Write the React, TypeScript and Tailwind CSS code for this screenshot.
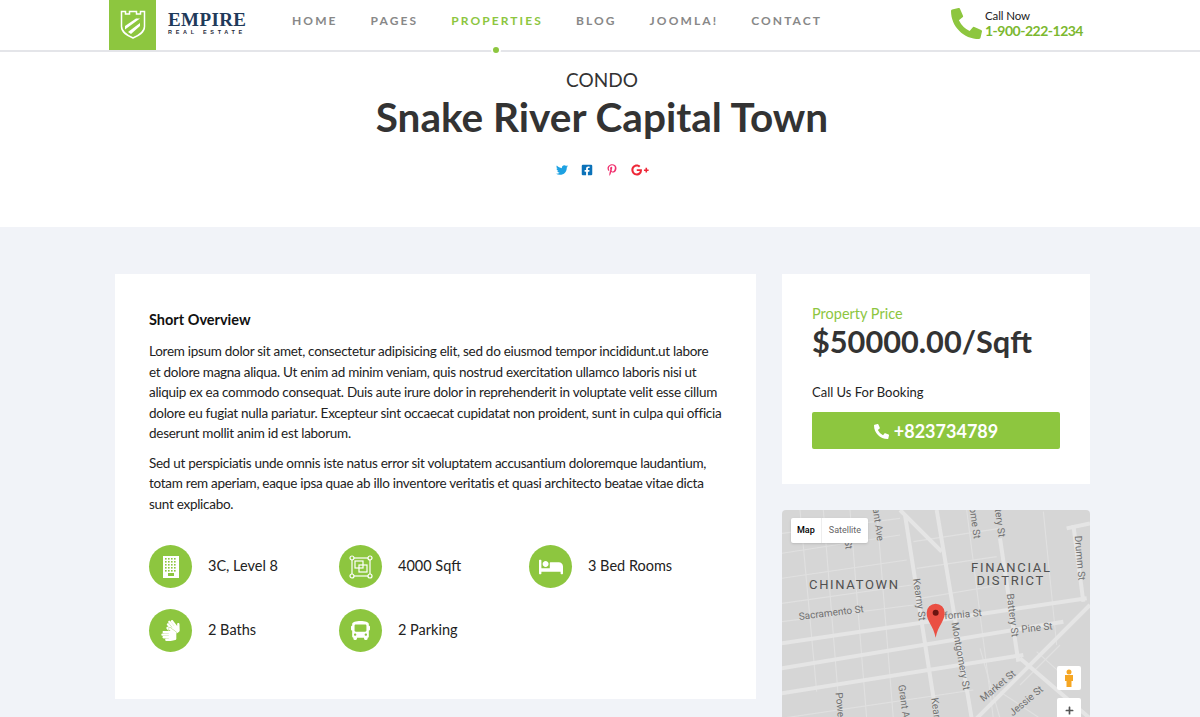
import {
  FaBed,
  FaBus,
  FaFacebookSquare,
  FaGooglePlusG,
  FaPhoneAlt,
  FaPinterestP,
  FaPlus,
  FaSignLanguage,
  FaTwitter,
} from "react-icons/fa";

const navLinks = ["HOME", "PAGES", "PROPERTIES", "BLOG", "JOOMLA!", "CONTACT"];

const ShieldLogo = () => (
  <svg width="26" height="30" viewBox="0 0 26 30" fill="none">
    <path d="M1.5 1.5h4v2.5h4V1.5h7v2.5h4V1.5h4v15c0 6-6 9-11.500 11.500C7.500 25.500 1.500 22.500 1.500 16.500z" stroke="white" strokeWidth="1.500" />
    <path d="M5 16l11-7.500 4 0-15 11z" fill="white" />
    <path d="M8 22l12-9v3l-9 8z" fill="white" />
  </svg>
);

const BuildingIcon = () => (
  <svg width="16" height="22" viewBox="0 0 16 22" fill="white">
    <path fillRule="evenodd" d="M0 0h16v22H0zM5 17v3h6v-3z" />
    <g fill="#8dc63f">
      {[2, 5, 8, 11].map((x) =>
        [2, 5, 8, 11, 14].map((y) => <rect key={`${x}-${y}`} x={x} y={y} width="1.600" height="1.600" />),
      )}
    </g>
  </svg>
);

const AreaIcon = () => (
  <svg width="24" height="24" viewBox="0 0 24 24" fill="none" stroke="white" strokeWidth="1.200">
    <rect x="3" y="3" width="18" height="18" />
    <rect x="6" y="6" width="8" height="7" />
    <rect x="10" y="10" width="8" height="7" />
    {[
      [3, 3],
      [21, 3],
      [3, 21],
      [21, 21],
    ].map(([cx, cy]) => (
      <circle key={`${cx}-${cy}`} cx={cx} cy={cy} r="2" fill="#8dc63f" />
    ))}
  </svg>
);

const features = [
  { label: "3C, Level 8", icon: <BuildingIcon /> },
  { label: "4000 Sqft", icon: <AreaIcon /> },
  { label: "3 Bed Rooms", icon: <FaBed size={24} color="white" /> },
  { label: "2 Baths", icon: <FaSignLanguage size={21} color="white" /> },
  { label: "2 Parking", icon: <FaBus size={19} color="white" /> },
];

const roads = [
  "M360 15L485 140",
  "M375 30L470 640",
  "M470 15L575 640",
  "M660 100L715 470",
  "M880 60L910 290",
  "M5 415L920 280",
  "M5 490L850 350",
  "M5 565L730 450",
  "M590 640L930 300",
  "M720 460L930 640",
  "M860 70L930 55",
];

const minorRoads = [
  "M5 85L360 40",
  "M5 145L360 90",
  "M5 220L380 165",
  "M5 295L395 240",
  "M5 350L400 300",
  "M400 110L660 70",
  "M410 190L650 155",
  "M420 280L660 240",
  "M5 640L580 555",
  "M60 15L110 560",
  "M130 15L180 640",
  "M210 15L260 640",
  "M290 15L340 640",
  "M560 15L640 640",
  "M790 20L830 420",
  "M720 540L840 420",
  "M600 430L660 640",
  "M770 440L870 530",
  "M660 560L780 640",
];

const mapLabels = [
  { text: "Sacramento St", x: 155, y: 333, r: -7 },
  { text: "fornia St", x: 550, y: 338, r: -5 },
  { text: "Pine St", x: 772, y: 378, r: -6 },
  { text: "Kearny St", x: 408, y: 285, r: 82 },
  { text: "Montgomery St", x: 532, y: 455, r: 80 },
  { text: "Battery St", x: 688, y: 332, r: 83 },
  { text: "Drumm St", x: 890, y: 160, r: 85 },
  { text: "Market St", x: 660, y: 550, r: -40 },
  { text: "Jessie St", x: 745, y: 595, r: -40 },
  { text: "Grant A", x: 362, y: 590, r: 82 },
  { text: "Powe", x: 170, y: 600, r: 85 },
  { text: "Kear", x: 458, y: 610, r: 82 },
  { text: "ant Ave", x: 285, y: 60, r: 82 },
  { text: "ome St", x: 575, y: 55, r: 82 },
  { text: "tery St", x: 650, y: 55, r: 82 },
  { text: "ton St", x: 192, y: 95, r: 82 },
];

const MapCard = () => (
  <div className="relative h-[260px] w-[308px] overflow-hidden rounded-[4px] bg-[#d6d6d6]">
    <svg className="block" width="308" height="260" viewBox="6 15 924 780" fontFamily="Roboto, sans-serif">
      <g stroke="#e0e0e0" strokeWidth="3.500" fill="none">
        {minorRoads.map((d) => (
          <path key={d} d={d} />
        ))}
      </g>
      <g stroke="#e5e5e5" strokeWidth="12" fill="none">
        {roads.map((d) => (
          <path key={d} d={d} />
        ))}
      </g>
      <g fill="#707070">
        {mapLabels.map((l) => (
          <text key={l.text} x={l.x} y={l.y} fontSize="30" textAnchor="middle" transform={`rotate(${l.r} ${l.x} ${l.y})`}>
            {l.text}
          </text>
        ))}
      </g>
      <g fill="#505050" fontSize="39" letterSpacing="5" textAnchor="middle">
        <text x="223" y="251">CHINATOWN</text>
        <text x="694" y="201">FINANCIAL</text>
        <text x="692" y="241">DISTRICT</text>
      </g>
      <path d="M467 398C460 360 440 350 440 323a27 27 0 0 1 54 0C494 350 474 360 467 398z" fill="#ea4f43" />
      <circle cx="467" cy="323" r="9" fill="#6b1410" />
    </svg>
    <div className="absolute left-[9px] top-[8px] flex h-[25px] items-center rounded-[2px] bg-white font-['Roboto',sans-serif] text-[9px] shadow-sm">
      <span className="flex h-full items-center border-r border-[#eeeeee] px-[6px] font-medium text-black">Map</span>
      <span className="px-[7px] text-[#666666]">Satellite</span>
    </div>
    <div className="absolute left-[275px] top-[156px] flex h-6 w-6 items-center justify-center rounded-[2px] bg-white">
      <svg width="10" height="18" viewBox="0 0 10 18" fill="#f5a623">
        <circle cx="5" cy="3" r="2.500" />
        <path d="M1 6h8v6H7.500v6h-5v-6H1z" />
      </svg>
    </div>
    <div className="absolute left-[275px] top-[188px] flex h-6 w-6 items-center justify-center rounded-[2px] bg-white">
      <FaPlus size={9} color="#555555" />
    </div>
  </div>
);

export default function App() {
  return (
    <div className="h-[717px] w-[1200px] overflow-hidden bg-white font-['Lato',sans-serif] text-[#222222]">
      <header className="relative flex h-[52px] items-start border-b-2 border-[#e4e5e9] pl-[109px]">
        <div className="flex h-[50px] w-[47px] items-center justify-center bg-[#8dc63f]">
          <ShieldLogo />
        </div>
        <div className="ml-3 flex h-[47px] w-[78px] flex-col justify-center">
          <div className="font-['Liberation_Serif',serif] text-[19px] font-bold leading-[18px] tracking-[0.4px] text-[#1f3a5a]">EMPIRE</div>
          <div className="whitespace-nowrap font-['Liberation_Sans',sans-serif] text-[5.500px] font-bold leading-[7px] tracking-[3.700px] text-[#1f2a3a]">REAL ESTATE</div>
        </div>
        <nav className="ml-[46px] flex h-[41px] items-center gap-[33px]">
          {navLinks.map((link) => (
            <a
              key={link}
              className={
                link === "PROPERTIES"
                  ? "relative text-[12px] font-bold tracking-[2.100px] text-[#8dc63f]"
                  : "text-[12px] font-bold tracking-[2.100px] text-[#888888]"
              }
            >
              {link}
              {link === "PROPERTIES" && (
                <span className="absolute left-[40px] top-[33px] h-[10px] w-[10px] rounded-full border-2 border-white bg-[#8dc63f]" />
              )}
            </a>
          ))}
        </nav>
        <div className="ml-auto mr-[117px] flex h-[46px] items-center gap-[3px]">
          <FaPhoneAlt size={31} color="#8dc63f" />
          <div className="flex flex-col">
            <span className="text-[11.500px] leading-[14px] tracking-[-0.1px] text-[#222222]">Call Now</span>
            <span className="text-[14px] font-bold leading-[15px] tracking-[-0.5px] text-[#7cb82f]">1-900-222-1234</span>
          </div>
        </div>
      </header>

      <section className="flex h-[175px] flex-col items-center pl-[4px] pt-[15px] text-[#333333]">
        <div className="text-[19px] leading-[26px]">CONDO</div>
        <h1 className="text-[40.500px] font-bold leading-[48px]">Snake River Capital Town</h1>
        <div className="mt-[20px] flex items-center gap-[13px]">
          <FaTwitter size={12} color="#1da1e2" />
          <FaFacebookSquare size={12} color="#0b72b9" />
          <FaPinterestP size={12} color="#f0306e" />
          <FaGooglePlusG size={18} color="#ee2737" />
        </div>
      </section>

      <main className="flex h-[490px] items-start gap-[26px] bg-[#f1f3f8] pl-[115px] pt-[47px]">
        <div className="h-[425px] w-[641px] bg-white pl-[34px] pr-[34px] pt-[35px] text-[#222222]">
          <h3 className="text-[14.500px] font-bold leading-[22px] text-[#111111]">Short Overview</h3>
          <p className="mt-[10px] text-[13.500px] leading-[20.500px] tracking-[-0.28px]">
            Lorem ipsum dolor sit amet, consectetur adipisicing elit, sed do eiusmod tempor incididunt.ut labore et dolore magna aliqua. Ut enim ad minim veniam, quis nostrud exercitation ullamco laboris nisi ut aliquip ex ea commodo consequat. Duis aute irure dolor in reprehenderit in voluptate velit esse cillum dolore eu fugiat nulla pariatur. Excepteur sint occaecat cupidatat non proident, sunt in culpa qui officia deserunt mollit anim id est laborum.
          </p>
          <p className="mt-[9px] text-[13.500px] leading-[20.500px] tracking-[-0.28px]">
            Sed ut perspiciatis unde omnis iste natus error sit voluptatem accusantium doloremque laudantium, totam rem aperiam, eaque ipsa quae ab illo inventore veritatis et quasi architecto beatae vitae dicta sunt explicabo.
          </p>
          <div className="mt-[31px] grid w-[570px] grid-cols-3 gap-y-[21px]">
            {features.map((f) => (
              <div key={f.label} className="flex items-center gap-[16px]">
                <div className="flex h-[43px] w-[43px] items-center justify-center rounded-full bg-[#8dc63f]">{f.icon}</div>
                <span className="-mt-[1px] text-[14.500px]">{f.label}</span>
              </div>
            ))}
          </div>
        </div>

        <div className="flex w-[308px] flex-col gap-[26px]">
          <div className="h-[210px] bg-white px-[30px] pt-[30px]">
            <div className="text-[14.500px] leading-[20px] text-[#8dc63f]">Property Price</div>
            <div className="-mt-[1px] text-[30.700px] font-bold leading-[37px] text-[#333333]">$50000.00/Sqft</div>
            <div className="mt-[22px] text-[13px] leading-[20px] text-[#222222]">Call Us For Booking</div>
            <div className="mt-[10px] flex h-[37px] items-center justify-center gap-[5px] rounded-[2px] bg-[#8dc63f] pt-[1px] text-[18px] font-bold text-white">
              <FaPhoneAlt size={15} />
              <span>+823734789</span>
            </div>
          </div>
          <MapCard />
        </div>
      </main>
    </div>
  );
}
